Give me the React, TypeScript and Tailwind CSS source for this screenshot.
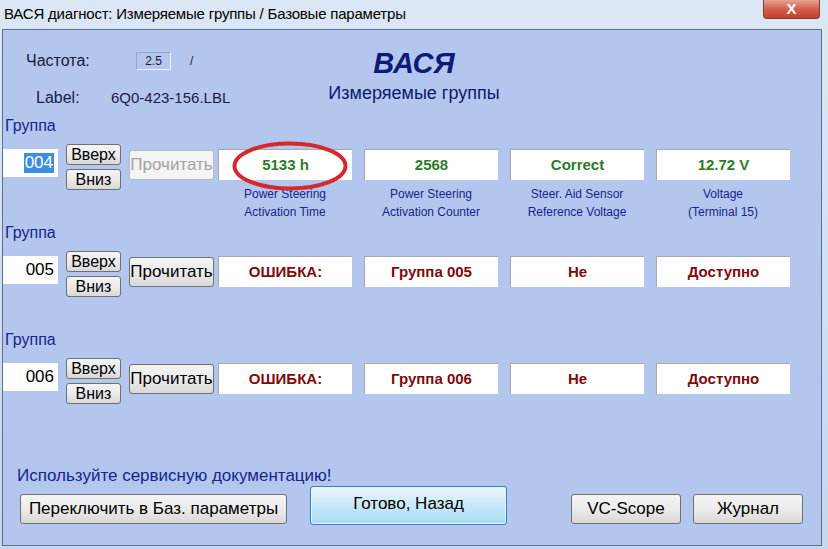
import React from "react";

type Cell = { value: string; kind: "ok" | "err"; label?: [string, string] };

const groups: { num: string; selected?: boolean; disabled?: boolean; cells: Cell[] }[] = [
  {
    num: "004",
    selected: true,
    disabled: true,
    cells: [
      { value: "5133 h", kind: "ok", label: ["Power Steering", "Activation Time"] },
      { value: "2568", kind: "ok", label: ["Power Steering", "Activation Counter"] },
      { value: "Correct", kind: "ok", label: ["Steer. Aid Sensor", "Reference Voltage"] },
      { value: "12.72 V", kind: "ok", label: ["Voltage", "(Terminal 15)"] },
    ],
  },
  {
    num: "005",
    cells: [
      { value: "ОШИБКА:", kind: "err" },
      { value: "Группа 005", kind: "err" },
      { value: "Не", kind: "err" },
      { value: "Доступно", kind: "err" },
    ],
  },
  {
    num: "006",
    cells: [
      { value: "ОШИБКА:", kind: "err" },
      { value: "Группа 006", kind: "err" },
      { value: "Не", kind: "err" },
      { value: "Доступно", kind: "err" },
    ],
  },
];

const btn =
  "flex items-center justify-center rounded-[3px] border border-[#707070] bg-gradient-to-b from-[#f4f4f4] via-[#ebebeb] to-[#d8d8d8] text-black";

function Group({ g }: { g: (typeof groups)[number] }) {
  return (
    <div className="h-[107px]">
      <div className="pl-[2px] text-[16px] leading-[20px] text-[#15258a]">Группа</div>
      <div className="mt-[8px] flex items-start">
        <div className="mt-[5px] flex h-[28px] w-[55px] items-center justify-end bg-white pr-[4px] text-[17px]">
          {g.selected ? (
            <span className="bg-[#3d8ee0] px-[1px] leading-[20px] text-white">{g.num}</span>
          ) : (
            <span className="leading-[20px] text-black">{g.num}</span>
          )}
        </div>
        <div className="ml-[8px] flex w-[55px] flex-col gap-[4px]">
          <div className={`${btn} h-[21px] text-[16px]`}>Вверх</div>
          <div className={`${btn} h-[21px] text-[16px]`}>Вниз</div>
        </div>
        {g.disabled ? (
          <div className="ml-[8px] mt-[6px] flex h-[30px] w-[85px] items-center justify-center rounded-[3px] border border-[#b5b9bc] bg-[#f4f4f4] text-[17px] text-[#a3a3a3]">
            Прочитать
          </div>
        ) : (
          <div className={`${btn} ml-[8px] mt-[6px] h-[30px] w-[85px] text-[17px]`}>Прочитать</div>
        )}
        <div className="ml-[4px] flex gap-[12px]">
          {g.cells.map((c, i) => (
            <div key={i} className="flex w-[134px] flex-col items-center">
              <div
                className={`relative mt-[5px] flex h-[31px] w-full items-center justify-center border-l border-t border-[#a8a8a8] bg-white text-[15px] font-bold ${
                  c.kind === "ok" ? "text-[#2a7d2a]" : "text-[#7d0b0b]"
                }`}
              >
                {c.value}
                {g.selected && i === 0 && (
                  <svg className="absolute left-[13px] top-[-9px]" width="116" height="50" viewBox="0 0 116 50">
                    <ellipse cx="58" cy="25" rx="55.5" ry="22.5" fill="none" stroke="#d32a2e" strokeWidth="4" />
                  </svg>
                )}
              </div>
              {c.label && (
                <div className="mt-[5px] text-center text-[12px] leading-[18px] text-[#15258a]">
                  <div>{c.label[0]}</div>
                  <div>{c.label[1]}</div>
                </div>
              )}
            </div>
          ))}
        </div>
      </div>
    </div>
  );
}

export default function App() {
  return (
    <div className="h-[549px] w-[828px] overflow-hidden bg-gradient-to-b from-[#dbe7f4] to-[#c6d8ee] font-['Liberation_Sans',Arial,sans-serif]">
      <div className="relative flex h-[29px] items-center pl-[4px]">
        <span className="text-[15px] tracking-[-0.2px] text-black">
          ВАСЯ диагност: Измеряемые группы / Базовые параметры
        </span>
        <div className="absolute right-[8px] top-0 flex h-[19px] w-[57px] items-center justify-center rounded-b-[4px] border border-t-0 border-[#8a3a30] bg-gradient-to-b from-[#e8a396] via-[#d0604c] to-[#c2402c] text-[15px] font-bold text-white">
          X
        </div>
      </div>
      <div className="ml-[2px] h-[517px] w-[820px] border border-[#5c6f8c] bg-[#b3c7ee]">
        <div className="flex h-[86px]">
          <div className="w-[290px] pt-[22px]">
            <div className="flex h-[18px] items-center text-[#1a1a3a]">
              <span className="w-[133px] pl-[23px] text-[16px]">Частота:</span>
              <span className="flex h-[18px] w-[35px] items-center justify-center border border-[#eef3fb] border-l-[#9aa6b8] border-t-[#9aa6b8] text-[12px]">
                2.5
              </span>
              <span className="ml-[19px] text-[12px]">/</span>
            </div>
            <div className="mt-[19px] flex h-[18px] items-center text-[#1a1a4a]">
              <span className="w-[108px] pl-[33px] text-[16px]">Label:</span>
              <span className="text-[15px]">6Q0-423-156.LBL</span>
            </div>
          </div>
          <div className="flex w-[242px] flex-col items-center pt-[16px]">
            <div className="text-[29px] font-bold italic leading-[34px] text-[#0c1a7a]">ВАСЯ</div>
            <div className="mt-[3px] whitespace-nowrap text-[18px] leading-[20px] text-[#0c1a6a]">Измеряемые группы</div>
          </div>
        </div>
        {groups.map((g) => (
          <Group key={g.num} g={g} />
        ))}
        <div className="mt-[29px] pl-[14px] text-[17px] leading-[20px] text-[#15258a]">
          Используйте сервисную документацию!
        </div>
        <div className="flex items-start">
          <div className={`${btn} ml-[17px] mt-[8px] h-[30px] w-[267px] text-[17px]`}>Переключить в Баз. параметры</div>
          <div className="ml-[23px] flex h-[39px] w-[197px] items-center justify-center rounded-[3px] border border-[#3c7fb1] bg-gradient-to-b from-[#eaf6fd] via-[#c9e8f9] to-[#a7d9f4] pb-[3px] text-[17px] text-black shadow-[inset_0_0_0_1px_#e4f3fc]">
            Готово, Назад
          </div>
          <div className={`${btn} ml-[64px] mt-[8px] h-[30px] w-[110px] text-[17px]`}>VC-Scope</div>
          <div className={`${btn} ml-[12px] mt-[8px] h-[30px] w-[110px] text-[17px]`}>Журнал</div>
        </div>
      </div>
    </div>
  );
}
